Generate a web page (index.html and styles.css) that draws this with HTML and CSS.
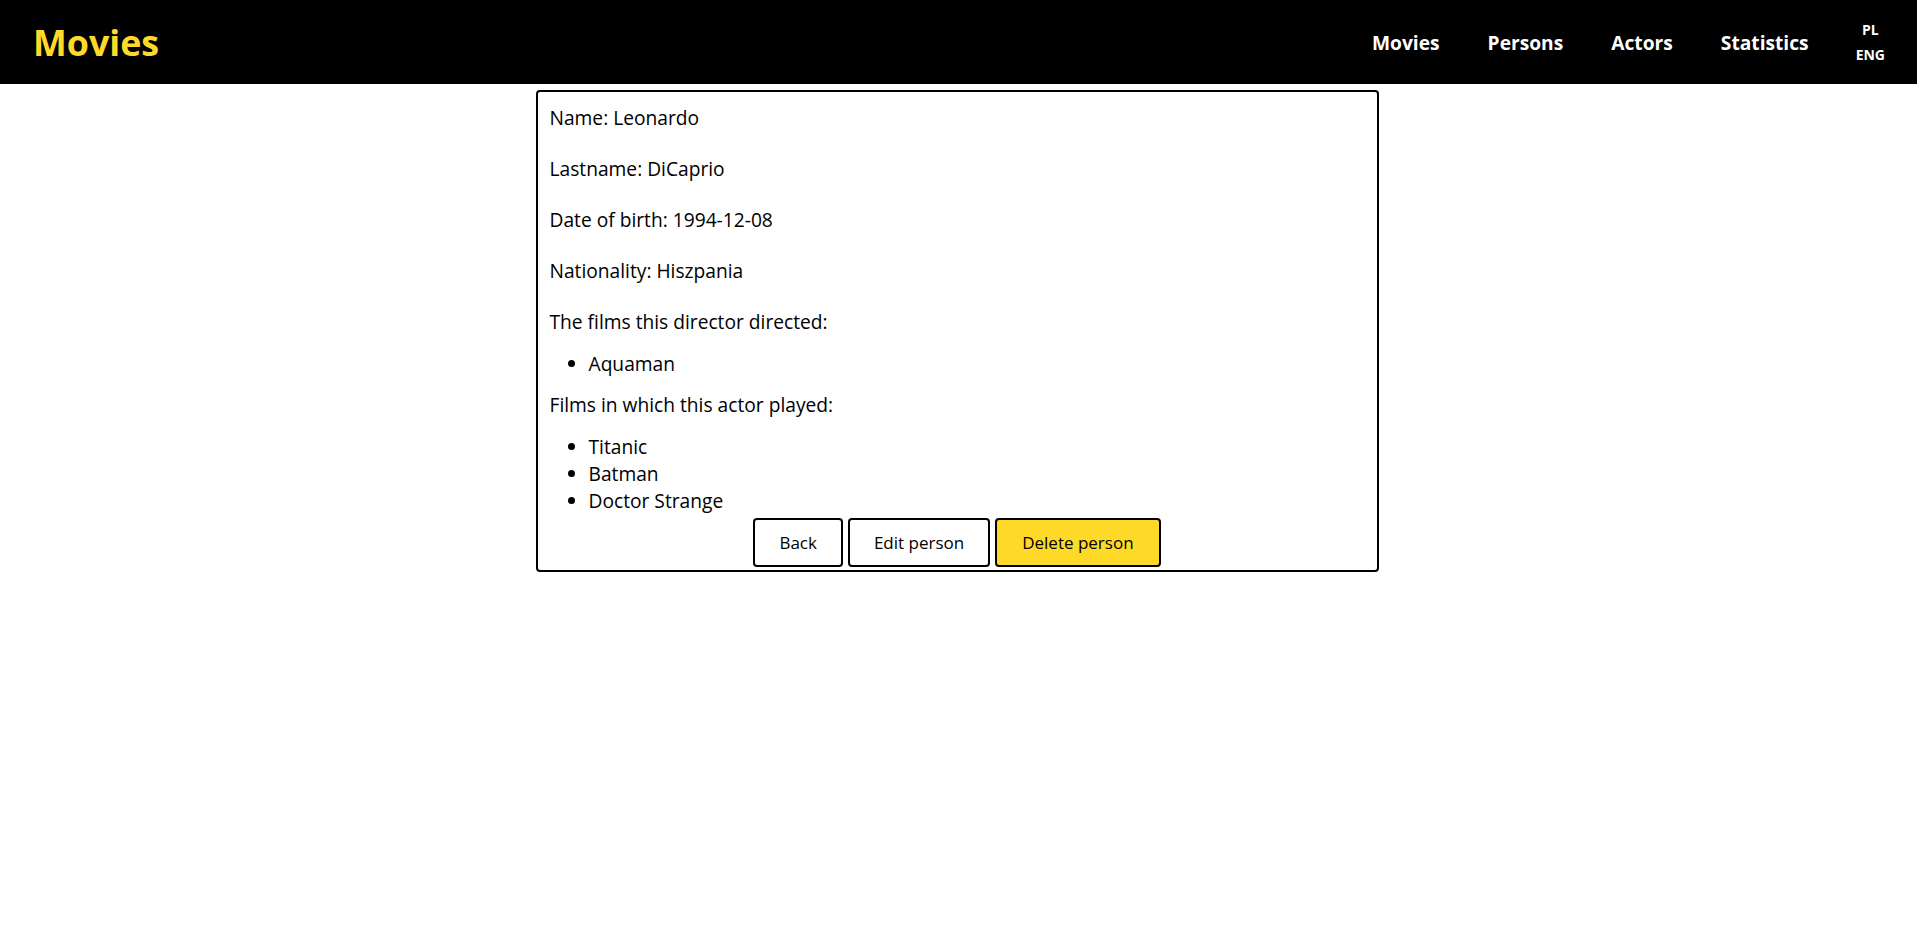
FILE: index.html
```html
<!DOCTYPE html>
<html lang="en">
<head>
<meta charset="utf-8">
<title>Movies</title>
<link rel="stylesheet" href="styles.css">
</head>
<body>
<header class="topbar">
  <a class="logo" href="#">Movies</a>
  <nav class="nav">
    <a class="nav-link" href="#">Movies</a>
    <a class="nav-link" href="#">Persons</a>
    <a class="nav-link" href="#">Actors</a>
    <a class="nav-link" href="#">Statistics</a>
    <div class="lang">
      <a class="lang-link" href="#">PL</a>
      <a class="lang-link" href="#">ENG</a>
    </div>
  </nav>
</header>
<main class="page">
  <section class="card">
    <p class="field">Name: Leonardo</p>
    <p class="field">Lastname: DiCaprio</p>
    <p class="field">Date of birth: 1994-12-08</p>
    <p class="field">Nationality: Hiszpania</p>
    <p class="field heading">The films this director directed:</p>
    <ul class="films">
      <li>Aquaman</li>
    </ul>
    <p class="field heading">Films in which this actor played:</p>
    <ul class="films">
      <li>Titanic</li>
      <li>Batman</li>
      <li>Doctor Strange</li>
    </ul>
    <div class="actions">
      <button class="btn">Back</button>
      <button class="btn">Edit person</button>
      <button class="btn btn-primary">Delete person</button>
    </div>
  </section>
</main>
</body>
</html>
```
FILE: styles.css
```css
* { box-sizing: border-box; }

body {
  margin: 0;
  font-family: "Open Sans", "Noto Sans", sans-serif;
  color: #000;
  background: #fff;
}

.topbar {
  height: 84px;
  background: #000;
  display: flex;
  align-items: center;
  justify-content: space-between;
  padding: 0 32px 0 33px;
}

.logo {
  color: #ffd927;
  font-weight: 700;
  font-size: 35.8px;
  text-decoration: none;
  line-height: 1;
  margin-top: 1px;
}

.nav {
  display: flex;
  align-items: center;
  gap: 48px;
}

.nav-link {
  color: #fff;
  font-weight: 700;
  font-size: 19.2px;
  text-decoration: none;
}

.lang {
  display: flex;
  flex-direction: column;
  align-items: center;
  gap: 7px;
  margin-left: -1px;
}

.lang-link {
  color: #fff;
  font-weight: 700;
  font-size: 14px;
  line-height: 18px;
  text-decoration: none;
}

.page {
  display: flex;
  justify-content: center;
  padding-top: 6px;
  padding-right: 3px;
}

.card {
  width: 843px;
  border: 2px solid #000;
  border-radius: 4px;
  padding: 12px 12px 3px 12px;
  font-size: 19.2px;
  line-height: 27px;
  display: flex;
  flex-direction: column;
}

.field {
  margin: 0 0 24px 0;
}

.field.heading {
  margin-bottom: 15px;
}

.films {
  margin: 0 0 14px 0;
  padding-left: 39px;
}

.films:last-of-type {
  margin-bottom: 4px;
}

.actions {
  display: flex;
  justify-content: center;
  gap: 5px;
}

.btn {
  font-family: "Open Sans", "Noto Sans", sans-serif;
  font-size: 17px;
  line-height: 23px;
  padding: 11px 24px;
  border: 2px solid #000;
  border-radius: 4px;
  background: #fff;
  color: #000;
}

.btn-primary {
  background: #ffd927;
  padding: 11px 25px;
}
```
